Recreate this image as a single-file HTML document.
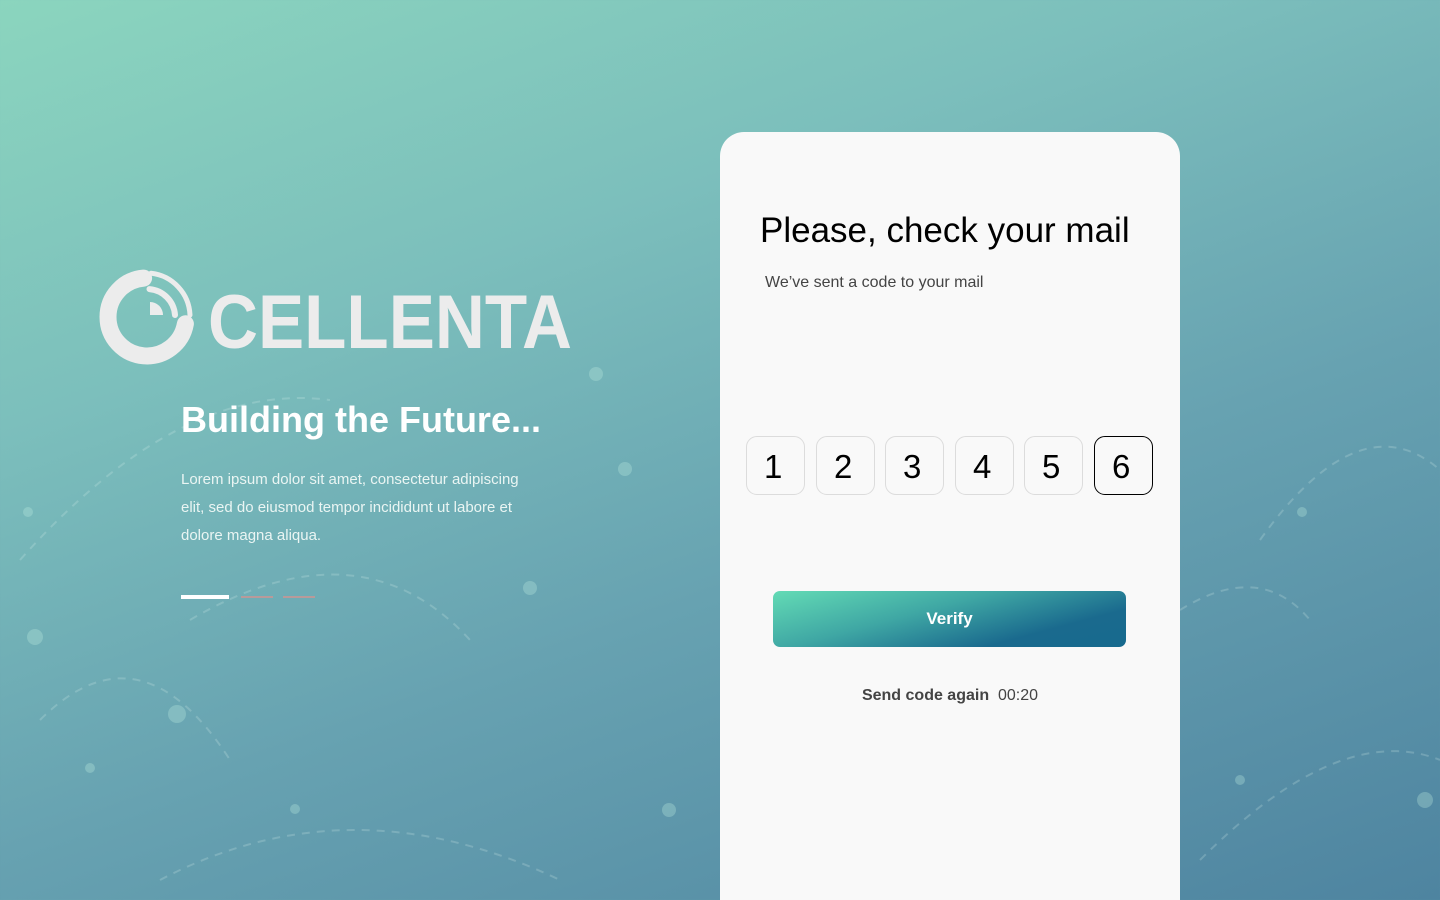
<!DOCTYPE html>
<html><head><meta charset="utf-8"><style>
*{margin:0;padding:0;box-sizing:border-box}
html,body{width:1440px;height:900px;overflow:hidden}
body{position:relative;font-family:"Liberation Sans",sans-serif;
background:linear-gradient(160deg,#8bd5be 0%,#7cbfbc 30%,#67a2b1 60%,#4e84a0 100%);}
.bg{position:absolute;left:0;top:0}
.h1{position:absolute;left:181px;top:399px;color:#fff;font-size:36px;font-weight:bold;white-space:nowrap}
.p{position:absolute;left:181px;top:466px;width:362px;color:#eaf5f3;font-size:15px;line-height:28px}
.bar{position:absolute;top:595px;height:4px}
.card{position:absolute;left:720px;top:132px;width:460px;height:800px;background:#f9f9f9;border-radius:24px}
.t{position:absolute;left:760px;top:211px;font-size:35px;color:#000;white-space:nowrap}
.s{position:absolute;left:765px;top:274px;font-size:16px;color:#444;white-space:nowrap}
.box{position:absolute;top:436px;width:59px;height:59px;border:1px solid #dcdcdc;border-radius:11px;font-size:33px;line-height:59px;padding-left:17px;color:#000}
.btn{position:absolute;left:773px;top:591px;width:353px;height:56px;border-radius:7px;
background:linear-gradient(165deg,#63dbb5 0%,#3fa7a4 40%,#1a6a8e 75%,#176a8e 100%);color:#fff;font-weight:bold;font-size:17px;text-align:center;line-height:56px}
</style></head><body>
<svg class="bg" width="720" height="900" viewBox="0 0 720 900">
<g fill="none" stroke="#d9f1ee" stroke-opacity=".22" stroke-width="2" stroke-dasharray="8 7">
<path d="M40 720 Q140 620 230 760"/>
<path d="M20 560 Q180 380 330 400"/>
<path d="M160 880 Q350 780 560 880"/>
<path d="M190 620 Q360 520 470 640"/>
</g>
<g fill="#bfeee0" fill-opacity=".3">
<circle cx="35" cy="637" r="8"/><circle cx="177" cy="714" r="9"/><circle cx="90" cy="768" r="5"/>
<circle cx="530" cy="588" r="7"/><circle cx="596" cy="374" r="7"/><circle cx="625" cy="469" r="7"/>
<circle cx="669" cy="810" r="7"/><circle cx="295" cy="809" r="5"/><circle cx="28" cy="512" r="5"/>
</g>
</svg>
<svg style="position:absolute;left:1180px;top:0" width="260" height="900">
<g fill="none" stroke="#d9f1ee" stroke-opacity=".22" stroke-width="2" stroke-dasharray="8 7">
<path d="M0 610 Q80 560 130 620"/><path d="M80 540 Q180 400 260 470"/><path d="M20 860 Q160 720 260 760"/></g>
<g fill="#bfeee0" fill-opacity=".3"><circle cx="122" cy="512" r="5"/><circle cx="245" cy="800" r="8"/><circle cx="60" cy="780" r="5"/></g>
</svg>
<svg style="position:absolute;left:98px;top:268px" width="480" height="100" viewBox="0 0 480 100">
<g fill="none" stroke="#ececec" stroke-linecap="round">
<path d="M45.6 10.1 A39 39 0 1 0 87.4 55.8" stroke-width="17"/>
<path d="M51.5 21.1 A28 28 0 0 1 77 47" stroke-width="6"/>
<path d="M53 5.2 A44 44 0 0 1 92 47" stroke-width="5"/>
</g>
<path d="M52 34 A13 13 0 0 1 65 47 L52 47 Z" fill="#ececec"/>
<text x="110" y="80" font-family="Liberation Sans,sans-serif" font-size="76" font-weight="bold" fill="#ececec" textLength="364" lengthAdjust="spacingAndGlyphs">CELLENTA</text>
</svg>
<div class="h1">Building the Future...</div>
<div class="p">Lorem ipsum dolor sit amet, consectetur adipiscing elit, sed do eiusmod tempor incididunt ut labore et dolore magna aliqua.</div>
<div class="bar" style="left:181px;width:48px;background:#fff"></div>
<div class="bar" style="left:241px;width:32px;height:2px;top:596px;background:#b89a9a"></div>
<div class="bar" style="left:283px;width:32px;height:2px;top:596px;background:#b89a9a"></div>
<div class="card"></div>
<div class="t">Please, check your mail</div>
<div class="s">We’ve sent a code to your mail</div>
<div class="box" style="left:746px">1</div>
<div class="box" style="left:816px">2</div>
<div class="box" style="left:885px">3</div>
<div class="box" style="left:955px">4</div>
<div class="box" style="left:1024px">5</div>
<div class="box" style="left:1094px;border-color:#000">6</div>
<div class="btn">Verify</div>
<div style="position:absolute;left:720px;width:460px;top:687px;text-align:center;font-size:16px;color:#444"><b>Send code again</b>&nbsp;&nbsp;00:20</div>
</body></html>
